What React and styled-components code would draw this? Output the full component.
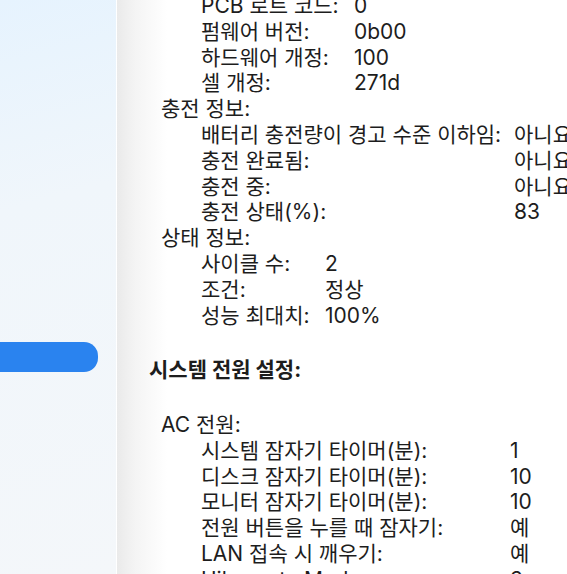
import React from "react";
import styled, { createGlobalStyle } from "styled-components";

const GlobalStyle = createGlobalStyle`
  html, body {
    margin: 0;
    padding: 0;
    overflow: hidden;
  }
  body {
    font-family: Inter, "Noto Sans CJK KR", sans-serif;
    color: #1d1d1d;
    -webkit-font-smoothing: antialiased;
  }
`;

const Window = styled.div`
  display: flex;
  width: 567px;
  height: 574px;
  overflow: hidden;
`;

const Sidebar = styled.div`
  width: 117px;
  flex-shrink: 0;
  padding-top: 342px;
  box-sizing: border-box;
  background: linear-gradient(165deg, #e6f3fe 0%, #f0f6fb 35%, #f4f7fa 100%);
  border-right: 1px solid #ffffff;
`;

const SelectedItem = styled.div`
  height: 30px;
  width: 138px;
  margin-left: -40px;
  border-radius: 14px;
  background: #2a83ef;
`;

const Content = styled.div`
  flex: 1;
  overflow: hidden;
  padding-left: 32px;
  background: linear-gradient(90deg, #eaeaea 0px, #f4f4f4 18px, #ffffff 50px);
  font-size: 21px;
  line-height: 25.8px;
  white-space: nowrap;
`;

const Inner = styled.div`
  margin-top: -7px;
`;

const Group = styled.div`
  display: grid;
  grid-template-columns: ${(p) => p.$keyWidth}px auto;
  padding-left: 52px;
`;

const Key = styled.div``;

const Value = styled.div``;

const Heading = styled.div`
  padding-left: 12px;
  margin-top: ${(p) => p.$gap || 0}px;
`;

const Title = styled.div`
  font-weight: 700;
  margin-top: 28.6px;
`;

const groupA = [
  ["PCB 로트 코드:", "0"],
  ["펌웨어 버전:", "0b00"],
  ["하드웨어 개정:", "100"],
  ["셀 개정:", "271d"],
];

const groupB = [
  ["배터리 충전량이 경고 수준 이하임:", "아니요"],
  ["충전 완료됨:", "아니요"],
  ["충전 중:", "아니요"],
  ["충전 상태(%):", "83"],
];

const groupC = [
  ["사이클 수:", "2"],
  ["조건:", "정상"],
  ["성능 최대치:", "100%"],
];

const groupD = [
  ["시스템 잠자기 타이머(분):", "1"],
  ["디스크 잠자기 타이머(분):", "10"],
  ["모니터 잠자기 타이머(분):", "10"],
  ["전원 버튼을 누를 때 잠자기:", "예"],
  ["LAN 접속 시 깨우기:", "예"],
  ["Hibernate Mode:", "3"],
];

const InfoGroup = ({ rows, keyWidth }) => (
  <Group $keyWidth={keyWidth}>
    {rows.map(([k, v]) => (
      <React.Fragment key={k}>
        <Key>{k}</Key>
        <Value>{v}</Value>
      </React.Fragment>
    ))}
  </Group>
);

export default function App() {
  return (
    <Window>
      <GlobalStyle />
      <Sidebar>
        <SelectedItem />
      </Sidebar>
      <Content>
        <Inner>
          <InfoGroup rows={groupA} keyWidth={153} />
          <Heading>충전 정보:</Heading>
          <InfoGroup rows={groupB} keyWidth={313} />
          <Heading>상태 정보:</Heading>
          <InfoGroup rows={groupC} keyWidth={124} />
          <Title>시스템 전원 설정:</Title>
          <Heading $gap={29.2}>AC 전원:</Heading>
          <InfoGroup rows={groupD} keyWidth={309} />
        </Inner>
      </Content>
    </Window>
  );
}
